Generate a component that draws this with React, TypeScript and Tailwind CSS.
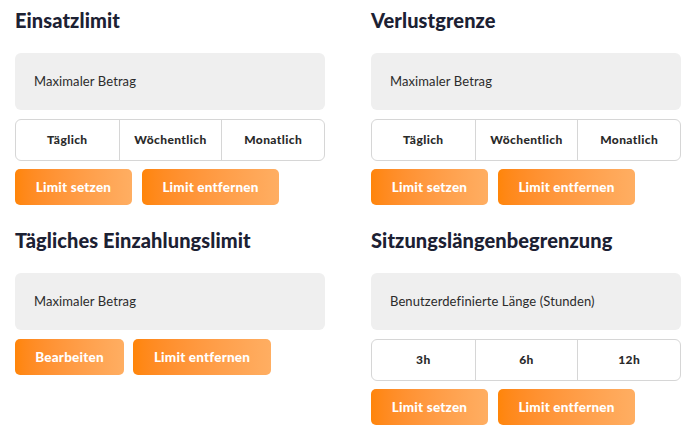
import React from 'react'

const font = { fontFamily: 'Lato, "Noto Sans", sans-serif' }

function Heading({ children }: { children: React.ReactNode }) {
  return (
    <h2 className="text-[20px] leading-[24px] font-black text-[#1c2133] tracking-[0.1px] mb-[21px]">
      {children}
    </h2>
  )
}

function Field({ label }: { label: string }) {
  return (
    <div className="h-[57px] rounded-[6px] bg-[#efefef] flex items-center px-[19px] text-[13px] tracking-[0.1px] text-[#2b2b2b]">
      {label}
    </div>
  )
}

function Segments({ items }: { items: string[] }) {
  return (
    <div className="mt-[9px] h-[42px] grid grid-cols-3 rounded-[6px] border border-[#d6d6d6] bg-white overflow-hidden">
      {items.map((it, i) => (
        <button
          key={it}
          className={
            'flex items-center justify-center text-[12px] tracking-[0.4px] font-black text-[#2a2a2a] ' +
            (i > 0 ? 'border-l border-[#d6d6d6]' : '')
          }
        >
          {it}
        </button>
      ))}
    </div>
  )
}

function Orange({ label, w }: { label: string; w: string }) {
  return (
    <button
      className={
        'h-[36px] rounded-[5px] bg-gradient-to-r from-[#ff8508] to-[#ffae62] text-white text-[13.5px] tracking-[0.2px] font-black ' +
        w
      }
    >
      {label}
    </button>
  )
}

export default function App() {
  return (
    <div style={font} className="w-[700px] h-[439px] bg-white pl-[15px] pt-[8px]">
      <div className="grid grid-cols-[310px_310px] gap-x-[46px] gap-y-[23px] items-start">
        {/* Einsatzlimit */}
        <section>
          <Heading>Einsatzlimit</Heading>
          <Field label="Maximaler Betrag" />
          <Segments items={['Täglich', 'Wöchentlich', 'Monatlich']} />
          <div className="mt-[8px] flex gap-[10px]">
            <Orange label="Limit setzen" w="w-[117px]" />
            <Orange label="Limit entfernen" w="w-[137px]" />
          </div>
        </section>

        {/* Verlustgrenze */}
        <section>
          <Heading>Verlustgrenze</Heading>
          <Field label="Maximaler Betrag" />
          <Segments items={['Täglich', 'Wöchentlich', 'Monatlich']} />
          <div className="mt-[8px] flex gap-[10px]">
            <Orange label="Limit setzen" w="w-[117px]" />
            <Orange label="Limit entfernen" w="w-[137px]" />
          </div>
        </section>

        {/* Tägliches Einzahlungslimit */}
        <section>
          <Heading>Tägliches Einzahlungslimit</Heading>
          <Field label="Maximaler Betrag" />
          <div className="mt-[9px] flex gap-[9px]">
            <Orange label="Bearbeiten" w="w-[109px]" />
            <Orange label="Limit entfernen" w="w-[138px]" />
          </div>
        </section>

        {/* Sitzungslängenbegrenzung */}
        <section>
          <Heading>Sitzungslängenbegrenzung</Heading>
          <Field label="Benutzerdefinierte Länge (Stunden)" />
          <Segments items={['3h', '6h', '12h']} />
          <div className="mt-[8px] flex gap-[10px]">
            <Orange label="Limit setzen" w="w-[117px]" />
            <Orange label="Limit entfernen" w="w-[137px]" />
          </div>
        </section>
      </div>
    </div>
  )
}
